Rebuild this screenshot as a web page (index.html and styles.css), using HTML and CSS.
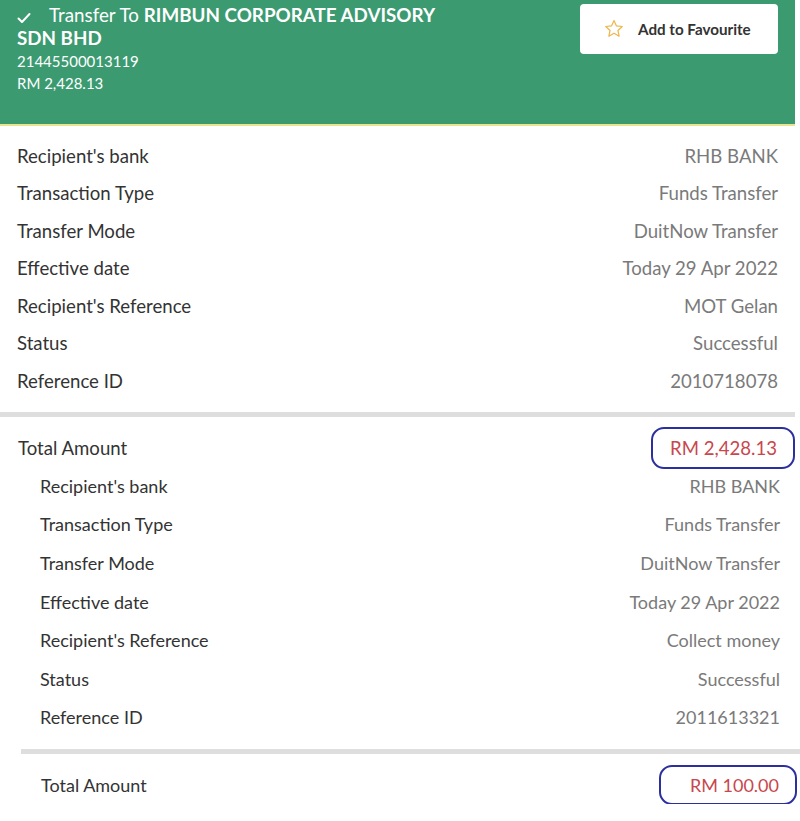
FILE: index.html
```html
<!DOCTYPE html>
<html>
<head>
<meta charset="utf-8">
<link rel="stylesheet" href="styles.css">
</head>
<body>
<div class="page">
  <header class="header">
    <div class="info">
      <svg class="check" viewBox="0 0 14 12" width="14" height="12"><path d="M1.5 6.5 L5 10 L12.5 2" fill="none" stroke="#fff" stroke-width="2" stroke-linecap="round" stroke-linejoin="round"/></svg>
      <p class="title">Transfer To <b>RIMBUN CORPORATE ADVISORY SDN BHD</b></p>
      <p class="sub">21445500013119</p>
      <p class="sub">RM 2,428.13</p>
    </div>
    <button class="fav"><svg class="star" viewBox="0 0 24 24" width="22" height="22"><path d="M12 2.8 L14.7 8.6 L21 9.3 L16.3 13.6 L17.6 19.9 L12 16.7 L6.4 19.9 L7.7 13.6 L3 9.3 L9.3 8.6 Z" fill="none" stroke="#eeb54a" stroke-width="1.3" stroke-linejoin="round"/></svg>Add to Favourite</button>
  </header>

  <section class="list first">
    <div class="row"><span class="label">Recipient's bank</span><span class="value">RHB BANK</span></div>
    <div class="row"><span class="label">Transaction Type</span><span class="value">Funds Transfer</span></div>
    <div class="row"><span class="label">Transfer Mode</span><span class="value">DuitNow Transfer</span></div>
    <div class="row"><span class="label">Effective date</span><span class="value">Today 29 Apr 2022</span></div>
    <div class="row"><span class="label">Recipient's Reference</span><span class="value">MOT Gelan</span></div>
    <div class="row"><span class="label">Status</span><span class="value">Successful</span></div>
    <div class="row"><span class="label">Reference ID</span><span class="value">2010718078</span></div>
  </section>
  <div class="divider d1"></div>

  <div class="total t1"><span class="label">Total Amount</span><span class="amount">RM 2,428.13<span class="ring r1"></span></span></div>

  <section class="list second">
    <div class="row"><span class="label">Recipient's bank</span><span class="value">RHB BANK</span></div>
    <div class="row"><span class="label">Transaction Type</span><span class="value">Funds Transfer</span></div>
    <div class="row"><span class="label">Transfer Mode</span><span class="value">DuitNow Transfer</span></div>
    <div class="row"><span class="label">Effective date</span><span class="value">Today 29 Apr 2022</span></div>
    <div class="row"><span class="label">Recipient's Reference</span><span class="value">Collect money</span></div>
    <div class="row"><span class="label">Status</span><span class="value">Successful</span></div>
    <div class="row"><span class="label">Reference ID</span><span class="value">2011613321</span></div>
  </section>
  <div class="divider d2"></div>

  <div class="total t2"><span class="label">Total Amount</span><span class="amount">RM 100.00<span class="ring r2"></span></span></div>
</div>
</body>
</html>
```
FILE: styles.css
```css
* { box-sizing: border-box; }
html, body { margin: 0; padding: 0; background: #fff; }
body { font-family: Lato, "Open Sans", sans-serif; color: #333; }
.page { width: 800px; }

.header {
  width: 795px;
  height: 126px;
  background: #3b9a70;
  border-bottom: 2px solid #e9e28e;
  display: flex;
  justify-content: space-between;
  align-items: flex-start;
  padding: 3px 17px 0 17px;
}
.info { width: 450px; color: #fff; position: relative; }
.check { position: absolute; left: 0; top: 9px; }
.title {
  margin: 0;
  font-size: 18.8px;
  line-height: 23px;
  text-indent: 32px;
}
.title b { font-weight: 700; }
.sub {
  margin: 0;
  font-size: 15px;
  line-height: 22px;
}
.title + .sub { margin-top: 1px; }

.fav {
  width: 198px;
  height: 50px;
  background: #fff;
  border: none;
  border-radius: 4px;
  display: flex;
  align-items: center;
  padding: 0 0 0 23px;
  font-family: Lato, sans-serif;
  font-size: 15.2px;
  font-weight: 700;
  color: #333;
  margin-top: 1px;
}
.star { margin-right: 13px; }

.list { display: flex; flex-direction: column; }
.first { padding: 11px 22px 12px 17px; }
.second { padding: 0 20px 0 40px; }
.row {
  display: flex;
  justify-content: space-between;
  align-items: center;
}
.first .row { height: 37.5px; font-size: 18.6px; }
.second .row { height: 38.6px; font-size: 18px; }
.label { color: #333; }
.value { color: #7a7a7a; }

.divider { height: 5px; background: #dedede; }
.d1 { width: 795px; }
.d2 { margin: 12px 0 0 21px; width: 779px; }

.total {
  display: flex;
  justify-content: space-between;
  align-items: center;
  height: 38px;
  margin-top: 12px;
}
.t1 { padding: 0 23px 0 18px; font-size: 18.6px; }
.t2 { padding: 0 21px 0 41px; font-size: 18px; }
.amount { position: relative; color: #c8474d; }
.ring {
  position: absolute;
  border: 2.5px solid #2c309e;
  border-radius: 13px;
}
.r1 { left: -19px; right: -18px; top: -10px; bottom: -10px; }
.r2 { left: -31px; right: -18px; top: -9px; bottom: -9px; }
```
